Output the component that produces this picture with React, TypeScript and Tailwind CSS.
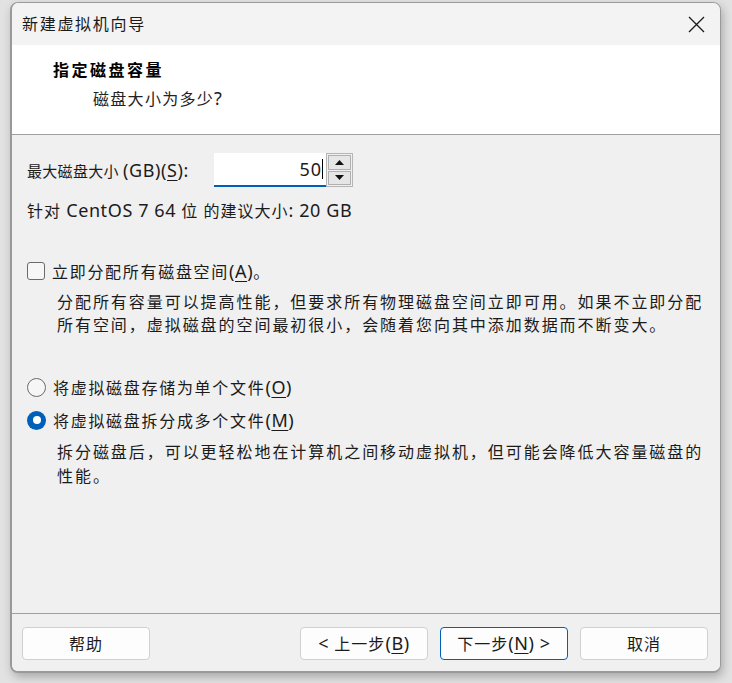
import React from "react";

const F = { fontFamily: '"Noto Sans", "Noto Sans CJK SC", sans-serif' };

function L({ children }: { children: React.ReactNode }) {
  return <span className="text-[18px] tracking-[0.6px]">{children}</span>;
}

function U({ children }: { children: React.ReactNode }) {
  return <span className="underline underline-offset-[3px] decoration-1">{children}</span>;
}

export default function App() {
  return (
    <div
      className="w-[732px] h-[683px] bg-[#e2e2e2] pl-[10px] pt-[2px] overflow-hidden text-[#1b1b1b]"
      style={F}
    >
      <div className="w-[711px] h-[671px] rounded-[8px] border border-[#9a9a9a] border-b-2 border-l-2 overflow-hidden flex flex-col shadow-[2px_4px_10px_rgba(0,0,0,0.25)] bg-[#f0f0f0]">
        {/* title bar */}
        <div className="h-[42px] shrink-0 bg-[#f3f3f3] flex items-center justify-between pl-[10px] pr-[15px]">
          <span className="text-[16px] tracking-[1.7px] text-[#1a1a1a]">新建虚拟机向导</span>
          <svg width="17" height="17" viewBox="0 0 17 17" className="mt-[1px]">
            <path d="M1 1 L16 16 M16 1 L1 16" stroke="#1a1a1a" strokeWidth="1.3" fill="none" />
          </svg>
        </div>
        {/* header */}
        <div className="h-[90px] shrink-0 bg-white border-b border-[#a0a0a0] pl-[41px] pt-[13px]">
          <div className="text-[16px] font-bold tracking-[2.5px] leading-[24px] text-black">指定磁盘容量</div>
          <div className="pl-[40px] mt-[4px] text-[16px] tracking-[1.3px] leading-[24px] text-[#222]">
            磁盘大小为多少<L>?</L>
          </div>
        </div>
        {/* body */}
        <div className="flex-1 bg-[#f0f0f0] pl-[15px] pr-[14px] pt-[18px] flex flex-col">
          <div className="h-[34px] flex items-center">
            <div className="w-[187px] text-[15px] tracking-[0.3px] leading-[20px] whitespace-nowrap">
              最大磁盘大小 <L>(GB)(<U>S</U>):</L>
            </div>
            <div className="w-[112px] h-[34px] bg-white border-b-2 border-[#005fb8] flex items-center justify-end pr-[3px]">
              <span className="text-[18px] tracking-[1px] leading-[20px]">50</span>
              <span className="w-px h-[20px] bg-black"></span>
            </div>
            <div className="w-[27px] h-[34px] border border-[#b5b5b5] flex flex-col p-px gap-px bg-[#f0f0f0]">
              <div className="flex-1 border border-[#b0b0b0] bg-[#e6e6e6] flex items-center justify-center">
                <svg width="9" height="5" viewBox="0 0 9 5"><path d="M0 5 L4.5 0 L9 5 Z" fill="#111" /></svg>
              </div>
              <div className="flex-1 border border-[#b0b0b0] bg-[#e6e6e6] flex items-center justify-center">
                <svg width="9" height="5" viewBox="0 0 9 5"><path d="M0 0 L4.5 5 L9 0 Z" fill="#111" /></svg>
              </div>
            </div>
          </div>
          <div className="mt-[13px] leading-[20px] text-[16px] tracking-[1px] whitespace-nowrap">
            针对 <L>CentOS 7 64</L> 位 的建议大小<L>: 20 GB</L>
          </div>

          <div className="mt-[40px] h-[20px] flex items-center">
            <div className="w-[18px] h-[18px] rounded-[3px] border border-[#6a6a6a] bg-[#f6f6f6]"></div>
            <div className="ml-[7px] text-[16px] tracking-[1.7px] leading-[20px] whitespace-nowrap">
              立即分配所有磁盘空间<L>(<U>A</U>)</L>。
            </div>
          </div>
          <div className="mt-[10px] pl-[30px] text-[16px] tracking-[1.95px] leading-[23px] whitespace-nowrap">
            <div>分配所有容量可以提高性能，但要求所有物理磁盘空间立即可用。如果不立即分配</div>
            <div>所有空间，虚拟磁盘的空间最初很小，会随着您向其中添加数据而不断变大。</div>
          </div>

          <div className="mt-[40px] h-[20px] flex items-center">
            <div className="w-[19px] h-[19px] rounded-full border border-[#6a6a6a] bg-[#f6f6f6]"></div>
            <div className="ml-[7px] text-[16px] tracking-[1.7px] leading-[20px] whitespace-nowrap">
              将虚拟磁盘存储为单个文件<L>(<U>O</U>)</L>
            </div>
          </div>
          <div className="mt-[13px] h-[20px] flex items-center">
            <div className="w-[19px] h-[19px] rounded-full bg-[#005fb8] flex items-center justify-center">
              <div className="w-[8px] h-[8px] rounded-full bg-white"></div>
            </div>
            <div className="ml-[7px] text-[16px] tracking-[1.7px] leading-[20px] whitespace-nowrap">
              将虚拟磁盘拆分成多个文件<L>(<U>M</U>)</L>
            </div>
          </div>
          <div className="mt-[10px] pl-[30px] text-[16px] tracking-[1.95px] leading-[24px] whitespace-nowrap">
            <div>拆分磁盘后，可以更轻松地在计算机之间移动虚拟机，但可能会降低大容量磁盘的</div>
            <div>性能。</div>
          </div>
        </div>
        {/* footer */}
        <div className="h-[58px] shrink-0 border-t border-[#a0a0a0] bg-[#f0f0f0] flex items-start pt-[13px] pl-[10px]">
          <button className="w-[128px] h-[33px] rounded-[4px] border border-[#d0d0d0] bg-[#fdfdfd] text-[16px] tracking-[1px]">帮助</button>
          <button className="ml-[150px] w-[128px] h-[33px] rounded-[4px] border border-[#d0d0d0] bg-[#fdfdfd] text-[16px] tracking-[1px] whitespace-nowrap">
            <L>&lt;</L> 上一步<L>(<U>B</U>)</L>
          </button>
          <button className="ml-[12px] w-[128px] h-[33px] rounded-[4px] border border-[#005fb8] bg-[#fdfdfd] text-[16px] tracking-[1px] whitespace-nowrap">
            下一步<L>(<U>N</U>) &gt;</L>
          </button>
          <button className="ml-[12px] w-[128px] h-[33px] rounded-[4px] border border-[#d0d0d0] bg-[#fdfdfd] text-[16px] tracking-[1px]">取消</button>
        </div>
      </div>
    </div>
  );
}
